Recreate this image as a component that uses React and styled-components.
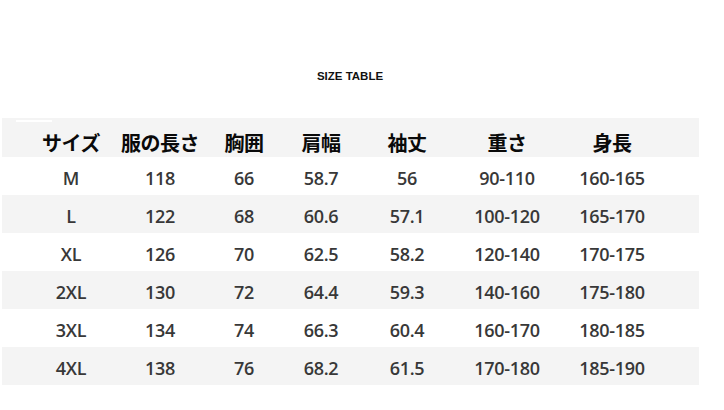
import React from 'react';
import styled, { createGlobalStyle } from 'styled-components';

const GlobalStyle = createGlobalStyle`
  html, body {
    margin: 0;
    padding: 0;
    background: #ffffff;
  }
`;

const Page = styled.div`
  width: 724px;
  height: 410px;
  padding-top: 69px;
  box-sizing: border-box;
  overflow: hidden;
`;

const Title = styled.h1`
  margin: 0 0 34px;
  padding-right: 24px;
  text-align: center;
  font-family: "Liberation Sans", Arial, sans-serif;
  font-size: 11.5px;
  line-height: 15px;
  font-weight: 700;
  color: #111;
`;

const Table = styled.div`
  margin-left: 2px;
  width: 697px;
`;

const Row = styled.div`
  position: relative;
  display: grid;
  grid-template-columns: 96px 82px 86px 68px 104px 96px 114px;
  padding-left: 21px;
  height: ${(p) => (p.head ? 39 : 38)}px;
  background: ${(p) => (p.shade ? '#f4f4f4' : '#ffffff')};
  align-items: center;

  ${(p) => p.head && `
    &::before {
      content: '';
      position: absolute;
      left: 14px;
      top: 2px;
      width: 36px;
      height: 2px;
      background: #ffffff;
    }
  `}
`;

const HeadCell = styled.div`
  display: flex;
  justify-content: center;
  white-space: nowrap;
  font-family: "Noto Sans CJK JP", sans-serif;
  font-weight: 700;
  font-size: 20px;
  letter-spacing: -0.5px;
  color: #0a0a0a;
  padding-top: 10px;
`;

const Cell = styled.div`
  display: flex;
  justify-content: center;
  white-space: nowrap;
  font-family: "Open Sans", "Liberation Sans", sans-serif;
  font-weight: 600;
  font-size: 18px;
  letter-spacing: -0.3px;
  color: #383838;
  padding-top: 3px;
`;

const headers = ['サイズ', '服の長さ', '胸囲', '肩幅', '袖丈', '重さ', '身長'];

const rows = [
  ['M', '118', '66', '58.7', '56', '90-110', '160-165'],
  ['L', '122', '68', '60.6', '57.1', '100-120', '165-170'],
  ['XL', '126', '70', '62.5', '58.2', '120-140', '170-175'],
  ['2XL', '130', '72', '64.4', '59.3', '140-160', '175-180'],
  ['3XL', '134', '74', '66.3', '60.4', '160-170', '180-185'],
  ['4XL', '138', '76', '68.2', '61.5', '170-180', '185-190'],
];

export default function App() {
  return (
    <Page>
      <GlobalStyle />
      <Title>SIZE TABLE</Title>
      <Table>
        <Row head shade>
          {headers.map((h) => (
            <HeadCell key={h}>{h}</HeadCell>
          ))}
        </Row>
        {rows.map((r, i) => (
          <Row key={r[0]} shade={i % 2 === 1}>
            {r.map((v, j) => (
              <Cell key={j}>{v}</Cell>
            ))}
          </Row>
        ))}
      </Table>
    </Page>
  );
}
